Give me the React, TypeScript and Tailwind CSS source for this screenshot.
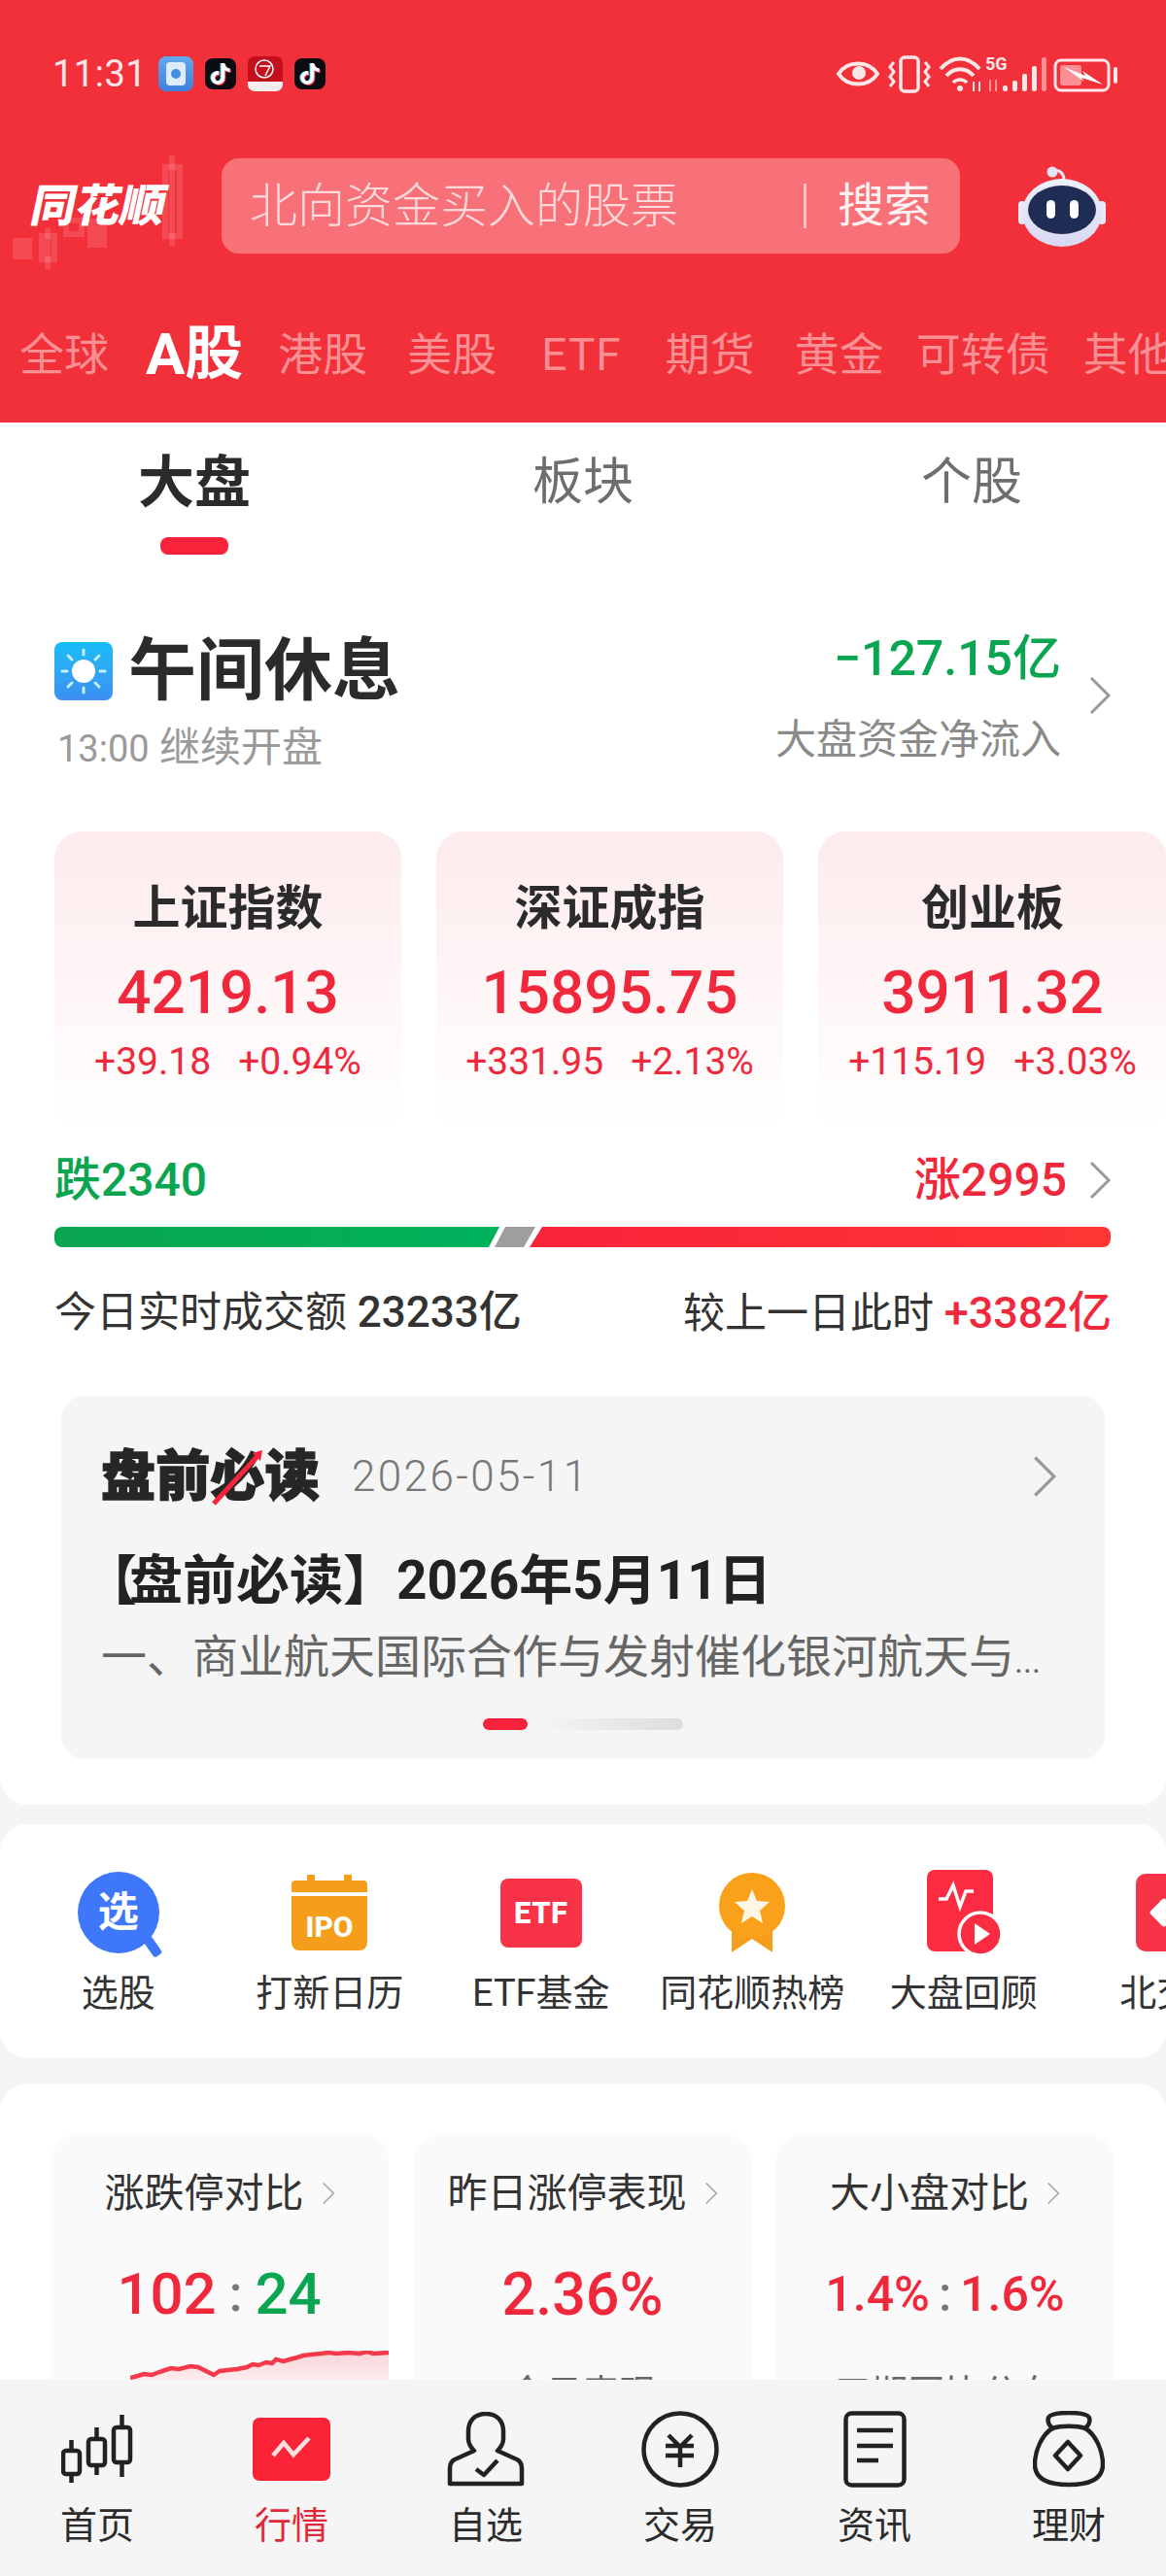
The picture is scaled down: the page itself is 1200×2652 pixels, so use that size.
import React from "react";
import { FaTiktok } from "react-icons/fa6";

const marketTabs = [
  { label: "全球", margin: "ml-0" },
  { label: "A股", margin: "ml-[38px]", active: true },
  { label: "港股", margin: "ml-[36px]" },
  { label: "美股", margin: "ml-[41px]" },
  { label: "ETF", margin: "ml-[46px] tracking-[1px]" },
  { label: "期货", margin: "ml-[45px]" },
  { label: "黄金", margin: "ml-[41px]" },
  { label: "可转债", margin: "ml-[33px]" },
  { label: "其他", margin: "ml-[34px]" },
];

const indexCards = [
  { name: "上证指数", value: "4219.13", change: "+39.18", pct: "+0.94%", width: "w-[357px]" },
  { name: "深证成指", value: "15895.75", change: "+331.95", pct: "+2.13%", width: "w-[357px]" },
  { name: "创业板", value: "3911.32", change: "+115.19", pct: "+3.03%", width: "w-[359px]" },
];

const Chevron = ({ className }: { className: string }) => (
  <svg viewBox="0 0 24 40" className={className} fill="none" stroke="currentColor" strokeWidth="3">
    <path d="M3 2 L21 20 L3 38" />
  </svg>
);

const TikTok = () => (
  <div className="relative flex h-[32px] w-[32px] items-center justify-center rounded-[8px] bg-[#0b0b12] text-[22px]">
    <FaTiktok className="absolute left-[4px] top-[5px] text-[#39e6e6]" />
    <FaTiktok className="absolute left-[6px] top-[6px] text-[#ff2d55]" />
    <FaTiktok className="absolute left-[5px] top-[5px] text-white" />
  </div>
);

const StatusBar = () => (
  <div className="flex h-[38px] items-center justify-between pl-[54px] pr-[50px] text-white">
    <div className="flex items-center">
      <span className="w-[109px] text-[38px] leading-none tracking-[0.5px] text-[#fde6e7]">11:31</span>
      {/* 通知栏小图标 */}
      <div className="flex h-[36px] w-[36px] items-center justify-center rounded-[8px] bg-gradient-to-b from-[#64a8ee] to-[#3f7fdc]">
        <div className="flex h-[24px] w-[20px] items-center justify-center rounded-[4px] bg-[#dcecfb]">
          <div className="h-[10px] w-[10px] rounded-full bg-[#3f8ee0]" />
        </div>
      </div>
      <div className="ml-[12px]">
        <TikTok />
      </div>
      <div className="ml-[12px] flex h-[36px] w-[36px] flex-col overflow-hidden rounded-[7px] bg-[#c4101c]">
        <svg viewBox="0 0 36 26" className="h-[26px] w-[36px]" fill="none" stroke="#fff" strokeWidth="1.5">
          <circle cx="17" cy="13" r="9" />
          <path d="M12 10 H23 L18 20" />
        </svg>
        <div className="h-[10px] bg-[#f5eeee]" />
      </div>
      <div className="ml-[12px]">
        <TikTok />
      </div>
    </div>
    <svg viewBox="0 0 295 40" className="h-[40px] w-[295px]" fill="none" stroke="#fde6e7">
      {/* 护眼 */}
      <path d="M8 20 C17 6 39 6 48 20 C39 34 17 34 8 20Z" strokeWidth="4" />
      <circle cx="29" cy="19" r="7" fill="#fde6e7" stroke="none" />
      {/* 振动 */}
      <rect x="72" y="3" width="18" height="35" rx="4" strokeWidth="3.5" />
      <path d="M65 8 L61 13 L65 18 L61 23 L65 28 L61 33" strokeWidth="3" />
      <path d="M97 8 L101 13 L97 18 L101 23 L97 28 L101 33" strokeWidth="3" />
      {/* wifi */}
      <path d="M113 15 C125 1 141 1 153 15" strokeWidth="4" />
      <path d="M119 22 C127 13 139 13 147 22" strokeWidth="4" />
      <path d="M126 29 C130 25 136 25 140 29" strokeWidth="3.5" />
      <circle cx="133" cy="35" r="3" fill="#fde6e7" stroke="none" />
      <path d="M147 38 V28 M153 28 V38" strokeWidth="2" />
      {/* 信号 */}
      <text x="159" y="16" fontSize="18" fontWeight="700" fill="#fde6e7" stroke="none" fontFamily="Roboto, sans-serif">5G</text>
      <path d="M164 38 V26 M170 26 V38" stroke="#fb8f94" strokeWidth="2" />
      <rect x="177" y="32" width="5" height="6" rx="2" fill="#fde6e7" stroke="none" />
      <rect x="187" y="27" width="5" height="11" rx="2" fill="#fde6e7" stroke="none" />
      <rect x="197" y="20" width="5" height="18" rx="2" fill="#fde6e7" stroke="none" />
      <rect x="207" y="12" width="5" height="26" rx="2" fill="#fde6e7" stroke="none" />
      <rect x="217" y="3" width="5" height="35" rx="2" fill="#fb8f94" stroke="none" />
      {/* 电量 */}
      <rect x="231" y="6" width="55" height="31" rx="6" strokeWidth="3" />
      <rect x="236" y="11" width="22" height="21" rx="3" fill="#fb8f94" stroke="none" />
      <path d="M240 13 L262 22 L259 17 L280 31 L258 24 L261 28Z" fill="#fff" stroke="none" />
      <rect x="291" y="13" width="4" height="17" rx="2" fill="#fde6e7" stroke="none" />
    </svg>
  </div>
);

const LogoCandles = () => (
  <svg viewBox="0 0 200 125" className="absolute left-0 top-[-8px] h-[125px] w-[200px]" fill="none" stroke="#ffffff" strokeOpacity="0.13" strokeWidth="6">
    <path d="M177 5 V98" />
    <rect x="170" y="17" width="15" height="71" />
    <rect x="13" y="90" width="20" height="22" fill="#ffffff" fillOpacity="0.13" stroke="none" />
    <rect x="43" y="88" width="13" height="24" />
    <path d="M49 80 V122" />
    <rect x="68" y="72" width="16" height="14" />
    <rect x="90" y="70" width="20" height="30" fill="#ffffff" fillOpacity="0.13" stroke="none" />
  </svg>
);

const Robot = () => (
  <svg viewBox="0 0 90 84" className="ml-[60px] h-[84px] w-[90px]">
    <defs>
      <linearGradient id="robotShell" x1="0" y1="0" x2="0" y2="1">
        <stop offset="0" stopColor="#eef0fb" />
        <stop offset="1" stopColor="#d9d8f4" />
      </linearGradient>
    </defs>
    <path d="M36 6 C42 4 47 8 47 16" fill="none" stroke="#e8e8f6" strokeWidth="3" />
    <circle cx="35" cy="7" r="5.5" fill="#e6e4f6" />
    <rect x="0" y="37" width="8" height="24" rx="4" fill="#e8e8f6" />
    <rect x="82" y="37" width="8" height="24" rx="4" fill="#e8e8f6" />
    <ellipse cx="45" cy="49" rx="41" ry="35" fill="url(#robotShell)" />
    <ellipse cx="45" cy="46" rx="35" ry="25" fill="#1f2d54" />
    <rect x="29" y="36" width="9" height="19" rx="4.5" fill="#ffffff" />
    <rect x="53" y="36" width="9" height="19" rx="4.5" fill="#ffffff" />
  </svg>
);

const Header = () => (
  <header className="h-[435px] shrink-0 overflow-hidden bg-[#f2303a] pt-[57px]">
    <StatusBar />
    <div className="mt-[68px] flex h-[98px] items-center">
      <div className="relative h-full w-[228px] shrink-0">
        <LogoCandles />
        <span className="absolute left-[33px] top-[21px] -skew-x-12 text-[46px] font-black leading-[56px] text-white">同花顺</span>
      </div>
      <div className="flex h-full w-[760px] items-center rounded-[18px] bg-[#f87179] pl-[29px] pr-[30px]">
        <span className="flex-1 text-[49px] font-light leading-none text-[#fdd9db]">北向资金买入的股票</span>
        <div className="mr-[32px] h-[46px] w-[3px] bg-[#fdc5c8]" />
        <span className="text-[48px] leading-none text-[#fff1f1]">搜索</span>
      </div>
      <Robot />
    </div>
    <nav className="mt-[74px] flex h-[60px] items-center whitespace-nowrap pl-[20px]">
      {marketTabs.map((tab) => (
        <span key={tab.label} className={`leading-none ${tab.margin} ${tab.active ? "text-[60px] font-bold text-white" : "text-[46px] text-[#fa8f94]"}`}>
          {tab.label}
        </span>
      ))}
    </nav>
  </header>
);

const SubTabs = () => (
  <div className="flex h-[136px]">
    <div className="flex w-[400px] flex-col items-center">
      <span className="flex h-[118px] items-center pt-[6px] text-[58px] font-bold leading-none text-[#2b2b2b]">大盘</span>
      <div className="h-[18px] w-[70px] rounded-[8px] bg-[#f8233a]" />
    </div>
    <span className="flex h-[118px] w-[400px] items-center justify-center pt-[6px] text-[52px] leading-none text-[#6e6e6e]">板块</span>
    <span className="flex h-[118px] w-[400px] items-center justify-center pt-[6px] text-[52px] leading-none text-[#6e6e6e]">个股</span>
  </div>
);

const SessionRow = () => (
  <div className="mt-[83px] flex h-[140px] justify-between pl-[56px] pr-[56px]">
    <div className="flex flex-col">
      <div className="flex h-[76px] items-center">
        <div className="flex h-[60px] w-[60px] items-center justify-center rounded-[8px] bg-gradient-to-b from-[#17bdf5] to-[#3b8ff2]">
          <svg viewBox="0 0 60 60" className="h-[60px] w-[60px]" stroke="#c6f0fb" strokeWidth="3" strokeLinecap="round">
            <circle cx="30" cy="30" r="12" fill="#ffffff" stroke="none" />
            <path d="M30 8 V13 M30 47 V52 M8 30 H13 M47 30 H52 M14 14 L18 18 M42 42 L46 46 M46 14 L42 18 M18 42 L14 46" />
          </svg>
        </div>
        <span className="ml-[16px] text-[70px] font-bold leading-none text-[#2b2b2b]">午间休息</span>
      </div>
      <span className="mt-[20px] pl-[3px] text-[42px] leading-[46px] text-[#9a9a9a]">
        <span className="text-[38px]">13:00</span> 继续开盘
      </span>
    </div>
    <div className="flex items-start">
      <div className="flex flex-col items-end">
        <span className="text-[50px] font-medium leading-[48px] text-[#0aa550]">−127.15亿</span>
        <span className="mt-[36px] text-[42px] leading-[48px] text-[#8a8a8a]">大盘资金净流入</span>
      </div>
      <Chevron className="ml-[28px] mt-[42px] h-[40px] w-[24px] text-[#999999]" />
    </div>
  </div>
);

const IndexCards = () => (
  <div className="mt-[62px] flex gap-[36px] pl-[56px]">
    {indexCards.map((card) => (
      <div key={card.name} className={`flex h-[307px] shrink-0 flex-col items-center rounded-[28px] bg-gradient-to-b from-[#fdebed] to-white ${card.width}`}>
        <span className="mt-[52px] text-[49px] font-bold leading-[56px] text-[#2b2b2b]">{card.name}</span>
        <span className="mt-[22px] text-[62px] font-medium leading-[72px] text-[#f0283c]">{card.value}</span>
        <div className="mt-[13px] flex gap-[28px] text-[39px] leading-[44px] text-[#f0283c]">
          <span>{card.change}</span>
          <span>{card.pct}</span>
        </div>
      </div>
    ))}
  </div>
);

const BreadthBar = () => (
  <svg viewBox="0 0 1087 21" className="mt-[19px] block h-[21px] w-[1087px]">
    <defs>
      <linearGradient id="barGreen" x1="0" y1="0" x2="1" y2="0">
        <stop offset="0" stopColor="#0aa550" />
        <stop offset="1" stopColor="#00b25c" />
      </linearGradient>
      <linearGradient id="barRed" x1="0" y1="0" x2="1" y2="0">
        <stop offset="0" stopColor="#f8233a" />
        <stop offset="1" stopColor="#ff3535" />
      </linearGradient>
    </defs>
    <path d="M8 0 H458 L447 21 H8 A8 8 0 0 1 0 13 V8 A8 8 0 0 1 8 0Z" fill="url(#barGreen)" />
    <path d="M464 0 H495 L483 21 H453Z" fill="#9e9e9e" />
    <path d="M502 0 H1079 A8 8 0 0 1 1087 8 V13 A8 8 0 0 1 1079 21 H489Z" fill="url(#barRed)" />
  </svg>
);

const Breadth = () => (
  <div className="px-[56px]">
    <div className="mt-[23px] flex h-[58px] items-center justify-between">
      <span className="text-[48px] font-medium leading-none text-[#0aa550]">跌2340</span>
      <div className="flex items-center">
        <span className="text-[48px] font-medium leading-none text-[#f0283c]">涨2995</span>
        <Chevron className="ml-[22px] h-[40px] w-[24px] text-[#999999]" />
      </div>
    </div>
    <BreadthBar />
    <div className="mt-[42px] flex h-[50px] items-center justify-between text-[43px] leading-none text-[#333333]">
      <span>
        今日实时成交额 <span className="text-[44px] font-medium">23233亿</span>
      </span>
      <span>
        较上一日此时 <span className="text-[45px] font-medium text-[#f0283c]">+3382亿</span>
      </span>
    </div>
  </div>
);

const PreMarketCard = () => (
  <div className="mx-[63px] mt-[61px] h-[374px] rounded-[24px] bg-[#f5f5f5] pl-[41px] pr-[49px] pt-[50px]">
    <div className="flex h-[66px] items-center">
      <div className="relative">
        <span className="text-[56px] font-black leading-none tracking-[0.25px] text-[#262626] [-webkit-text-stroke:1.5px_#262626]">盘前必读</span>
        <svg viewBox="0 0 56 58" className="absolute left-[112px] top-[0px] h-[58px] w-[56px]">
          <path d="M4 56 L50 6" stroke="#f8233a" strokeWidth="5" />
          <path d="M44 4 L54 1 L52 12Z" fill="#f8233a" />
        </svg>
      </div>
      <span className="ml-[33px] text-[44px] font-light leading-none tracking-[2.4px] text-[#777777]">2026-05-11</span>
      <Chevron className="ml-auto h-[44px] w-[26px] text-[#999999]" />
    </div>
    <p className="mt-[41px] -ml-[18px] text-[55px] font-bold leading-[66px] text-[#222222]">
      <span className="mr-[-8px]">【</span>盘前必读】2026年5月11日
    </p>
    <p className="mt-[18px] whitespace-nowrap text-[47px] leading-[56px] text-[#666666]">
      一、商业航天国际合作与发射催化银河航天与<span className="text-[34px]">...</span>
    </p>
    <div className="mt-[31px] ml-[393px] flex h-[12px] w-[206px]">
      <div className="h-full w-[46px] rounded-full bg-[#f8233a]" />
      <div className="ml-[10px] h-full w-[150px] rounded-r-full bg-gradient-to-r from-[#f5f5f5] to-[#dddddd]" />
    </div>
  </div>
);

const PickIcon = () => (
  <div className="relative flex h-[84px] w-[84px] items-center justify-center rounded-full bg-[#3f77fb] text-[42px] font-bold leading-none text-white">
    选
    <div className="absolute bottom-[-4px] right-[2px] h-[22px] w-[10px] -rotate-[35deg] rounded-b-[3px] bg-[#3f77fb]" />
  </div>
);

const IpoIcon = () => (
  <svg viewBox="0 0 78 78" className="h-[78px] w-[78px]">
    <path d="M16 0 H24 V6 H54 V0 H62 V6 H74 A4 4 0 0 1 78 10 V18 H0 V10 A4 4 0 0 1 4 6 H16Z" fill="#f59e1c" />
    <path d="M0 22 H78 V70 A8 8 0 0 1 70 78 H8 A8 8 0 0 1 0 70Z" fill="#f59e1c" />
    <text x="39" y="64" textAnchor="middle" fontSize="30" fontWeight="800" fill="#ffffff" fontFamily="Roboto, sans-serif">IPO</text>
  </svg>
);

const EtfIcon = () => (
  <div className="flex h-[71px] w-[84px] items-center justify-center rounded-[8px] bg-[#f83347] text-[31px] font-extrabold leading-none tracking-[0.5px] text-white">ETF</div>
);

const MedalIcon = () => (
  <svg viewBox="0 0 68 82" className="h-[82px] w-[68px]">
    <path d="M13 50 H55 V82 L34 68 L13 82Z" fill="#f59e1c" />
    <circle cx="34" cy="34" r="34" fill="#f9a11b" />
    <path d="M34 17 L39 29 L52 30 L42 39 L45 52 L34 45 L23 52 L26 39 L16 30 L29 29Z" fill="#fff6e6" />
  </svg>
);

const ReviewIcon = () => (
  <svg viewBox="0 0 76 88" className="h-[88px] w-[76px]">
    <rect x="0" y="0" width="68" height="84" rx="8" fill="#fb2c42" />
    <path d="M12 30 L20 30 L27 16 L34 38 L40 22 L48 22" fill="none" stroke="#ffffff" strokeWidth="3.5" />
    <circle cx="55" cy="66" r="22" fill="#fb2c42" stroke="#ffffff" strokeWidth="3.5" />
    <path d="M49 55 L65 66 L49 77Z" fill="#ffffff" />
  </svg>
);

const NorthIcon = () => (
  <div className="flex h-[80px] w-[80px] items-center justify-start rounded-[10px] bg-[#f83347] pl-[18px]">
    <div className="h-[22px] w-[22px] rotate-45 rounded-[3px] bg-white" />
  </div>
);

const quickLinks = [
  { label: "选股", icon: <PickIcon /> },
  { label: "打新日历", icon: <IpoIcon /> },
  { label: "ETF基金", icon: <EtfIcon /> },
  { label: "同花顺热榜", icon: <MedalIcon /> },
  { label: "大盘回顾", icon: <ReviewIcon /> },
  { label: "北交所", icon: <NorthIcon /> },
];

const QuickLinks = () => (
  <section className="mt-[20px] flex h-[241px] overflow-hidden rounded-[28px] bg-white pl-[13px] pt-[46px]">
    {quickLinks.map((item) => (
      <div key={item.label} className="flex w-[217.5px] shrink-0 flex-col items-center">
        <div className="flex h-[90px] items-center">{item.icon}</div>
        <span className="mt-[15px] whitespace-nowrap text-[38px] leading-[46px] text-[#333333]">{item.label}</span>
      </div>
    ))}
  </section>
);

const SmallChevron = () => <Chevron className="ml-[18px] h-[24px] w-[14px] text-[#aaaaaa]" />;

const limitLine =
  "0 28 L8 26 L14 24 L22 25 L30 22 L36 20 L42 18 L50 19 L62 16 L70 17 L74 19 L80 22 L86 25 L92 21 L100 20 L110 19 L120 17 L126 14 L132 15 L140 12 L146 13 L150 9 L158 11 L164 9 L172 7 L178 5 L186 4 L196 3 L204 2 L212 3 L224 2 L236 3 L244 1 L250 3 L266 2";

const LimitChart = () => (
  <svg viewBox="0 0 266 30" className="absolute bottom-0 right-0 h-[30px] w-[266px]">
    <defs>
      <linearGradient id="limitFill" x1="0" y1="0" x2="0" y2="1">
        <stop offset="0" stopColor="#fbd5d8" />
        <stop offset="1" stopColor="#fdeced" />
      </linearGradient>
    </defs>
    <path d={`M${limitLine} V30 H0Z`} fill="url(#limitFill)" />
    <path d={`M${limitLine}`} fill="none" stroke="#f4394b" strokeWidth="4.5" />
  </svg>
);

const CompareCards = () => (
  <section className="mt-[26px] flex gap-[26px] rounded-t-[28px] bg-white pl-[52px] pt-[52px]">
    <div className="relative h-[400px] w-[348px] shrink-0 overflow-hidden rounded-t-[28px] bg-[#fafafa]">
      <div className="mt-[37px] flex h-[48px] items-center justify-center text-[41px] leading-none text-[#333333]">
        涨跌停对比
        <SmallChevron />
      </div>
      <div className="mt-[44px] flex h-[72px] items-center justify-center pr-[1px] text-[60px] font-medium leading-none text-[#f0283c]">
        102
        <span className="mx-[13px] text-[52px] text-[#777777]">:</span>
        <span className="text-[#0aa550]">24</span>
      </div>
      <div className="absolute left-0 top-[223px] h-[30px] w-full">
        <LimitChart />
      </div>
    </div>
    <div className="h-[400px] w-[347px] shrink-0 overflow-hidden rounded-t-[28px] bg-[#fafafa]">
      <div className="mt-[37px] flex h-[48px] items-center justify-center text-[41px] leading-none text-[#333333]">
        昨日涨停表现
        <SmallChevron />
      </div>
      <div className="mt-[44px] flex h-[72px] items-center justify-center text-[61px] font-medium leading-none text-[#f0283c]">2.36%</div>
      <div className="mt-[47px] text-center text-[38px] leading-none text-[#666666]">今日表现</div>
    </div>
    <div className="h-[400px] w-[347px] shrink-0 overflow-hidden rounded-t-[28px] bg-[#fafafa]">
      <div className="mt-[37px] flex h-[48px] items-center justify-center text-[41px] leading-none text-[#333333]">
        大小盘对比
        <SmallChevron />
      </div>
      <div className="mt-[44px] flex h-[72px] items-center justify-center text-[50px] font-medium leading-none text-[#f0283c]">
        1.4%
        <span className="mx-[9px] text-[#777777]">:</span>
        1.6%
      </div>
      <div className="mt-[47px] text-center text-[38px] leading-none text-[#666666]">三期同比分布</div>
    </div>
  </section>
);

const navStroke = { fill: "none", stroke: "#222222", strokeWidth: 4.5, strokeLinejoin: "round" as const };

const navItems = [
  {
    label: "首页",
    icon: (
      <svg viewBox="0 0 74 72" className="h-[72px] w-[74px]" {...navStroke}>
        <rect x="2" y="38" width="17" height="24" rx="3" />
        <path d="M10.5 27 V38 M10.5 62 V71" />
        <rect x="28" y="26" width="17" height="27" rx="3" />
        <path d="M36.5 14 V26 M36.5 53 V63" />
        <rect x="54" y="14" width="17" height="36" rx="3" />
        <path d="M62.5 1 V14 M62.5 50 V65" />
      </svg>
    ),
  },
  {
    label: "行情",
    active: true,
    icon: (
      <div className="flex h-[65px] w-[80px] items-center justify-center rounded-[7px] bg-[#fb2436]">
        <svg viewBox="0 0 80 65" className="h-[65px] w-[80px]" fill="none" stroke="#fbdfe1" strokeWidth="4.5">
          <path d="M21 39 L32 26 L42 38 L58 21" />
        </svg>
      </div>
    ),
  },
  {
    label: "自选",
    icon: (
      <svg viewBox="0 0 80 77" className="h-[77px] w-[80px]" {...navStroke}>
        <path d="M40 2 C28 2 22 10 22 20 V28 C22 33 25 37 28 40 L8 49 C4 51 3 54 3 58 V74 H77 V58 C77 54 76 51 72 49 L52 40 C55 37 58 33 58 28 V20 C58 10 52 2 40 2Z" />
        <path d="M30 59 L38 65 L52 50" />
      </svg>
    ),
  },
  {
    label: "交易",
    icon: (
      <svg viewBox="0 0 80 79" className="h-[79px] w-[80px]" {...navStroke}>
        <ellipse cx="40" cy="39.5" rx="37.5" ry="37" />
        <path d="M28 25 L40 37 L52 25 M25 36 H54 M25 46 H54 M40 37 V58" />
      </svg>
    ),
  },
  {
    label: "资讯",
    icon: (
      <svg viewBox="0 0 65 79" className="h-[79px] w-[65px]" {...navStroke}>
        <rect x="2.5" y="2.5" width="60" height="74" rx="6" />
        <path d="M14 20 H51 M14 36 H51 M14 51 H36" />
      </svg>
    ),
  },
  {
    label: "理财",
    icon: (
      <svg viewBox="0 0 74 79" className="h-[79px] w-[74px]" {...navStroke}>
        <path d="M20 18 C10 24 2 40 2 55 C2 70 16 76 37 76 C58 76 72 70 72 55 C72 40 64 24 54 18" />
        <path d="M20 18 C16 14 15 10 16 7 C18 3 28 2 37 2 C46 2 56 3 58 7 C59 10 58 14 54 18 C45 15 29 15 20 18Z" />
        <path d="M36 32 L49 46 L36 60 L23 46Z" />
      </svg>
    ),
  },
];

const BottomNav = () => (
  <nav className="flex h-[202px] shrink-0 bg-[#f5f5f5]">
    {navItems.map((item) => (
      <div key={item.label} className="flex w-[200px] flex-col items-center pt-[31px]">
        <div className="flex h-[80px] items-center">{item.icon}</div>
        <span className={`mt-[16px] text-[38px] leading-[46px] ${item.active ? "text-[#e0283c]" : "text-[#2b2b2b]"}`}>{item.label}</span>
      </div>
    ))}
  </nav>
);

export default function App() {
  return (
    <div className="flex h-[2652px] w-[1200px] flex-col overflow-hidden bg-[#f5f5f5] font-['Roboto','Noto_Sans_CJK_SC',sans-serif]">
      <Header />
      <main className="min-h-0 flex-1 overflow-hidden">
        <section className="h-[1423px] rounded-b-[28px] bg-white">
          <SubTabs />
          <SessionRow />
          <IndexCards />
          <Breadth />
          <PreMarketCard />
        </section>
        <QuickLinks />
        <CompareCards />
      </main>
      <BottomNav />
    </div>
  );
}
